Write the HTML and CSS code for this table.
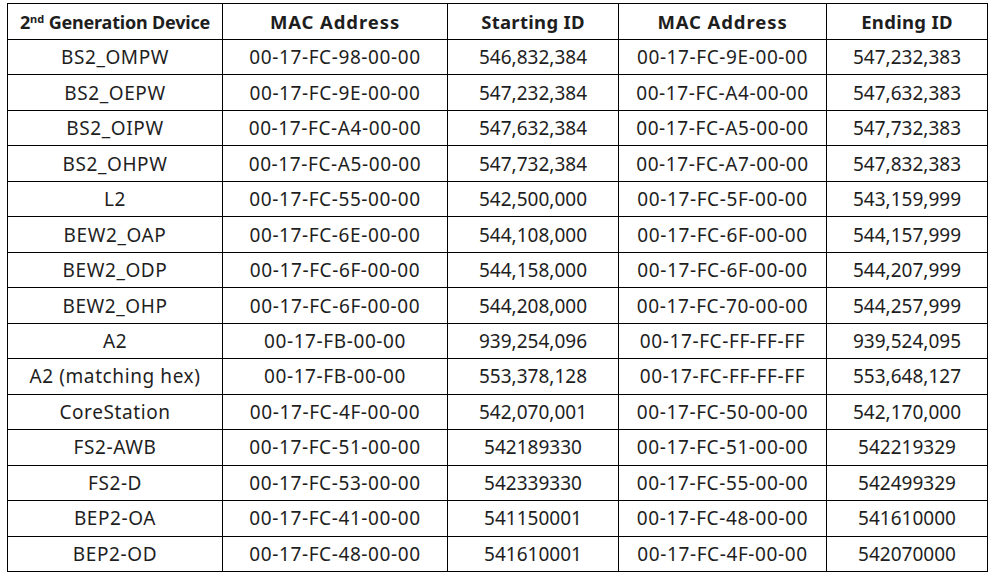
FILE: index.html
```html
<!DOCTYPE html>
<html>
<head>
<meta charset="utf-8">
<link rel="stylesheet" href="styles.css">
</head>
<body>
<table class="ids">
<colgroup>
<col class="c1"><col class="c2"><col class="c3"><col class="c4"><col class="c5">
</colgroup>
<thead>
<tr><th class="dev">2<sup>nd</sup> Generation Device</th><th class="mac">MAC Address</th><th>Starting ID</th><th class="mac">MAC Address</th><th>Ending ID</th></tr>
</thead>
<tbody>
<tr><td class="dev">BS2_OMPW</td><td class="mac">00-17-FC-98-00-00</td><td>546,832,384</td><td class="mac">00-17-FC-9E-00-00</td><td>547,232,383</td></tr>
<tr><td class="dev">BS2_OEPW</td><td class="mac">00-17-FC-9E-00-00</td><td>547,232,384</td><td class="mac">00-17-FC-A4-00-00</td><td>547,632,383</td></tr>
<tr><td class="dev">BS2_OIPW</td><td class="mac">00-17-FC-A4-00-00</td><td>547,632,384</td><td class="mac">00-17-FC-A5-00-00</td><td>547,732,383</td></tr>
<tr><td class="dev">BS2_OHPW</td><td class="mac">00-17-FC-A5-00-00</td><td>547,732,384</td><td class="mac">00-17-FC-A7-00-00</td><td>547,832,383</td></tr>
<tr><td class="dev">L2</td><td class="mac">00-17-FC-55-00-00</td><td>542,500,000</td><td class="mac">00-17-FC-5F-00-00</td><td>543,159,999</td></tr>
<tr><td class="dev">BEW2_OAP</td><td class="mac">00-17-FC-6E-00-00</td><td>544,108,000</td><td class="mac">00-17-FC-6F-00-00</td><td>544,157,999</td></tr>
<tr><td class="dev">BEW2_ODP</td><td class="mac">00-17-FC-6F-00-00</td><td>544,158,000</td><td class="mac">00-17-FC-6F-00-00</td><td>544,207,999</td></tr>
<tr><td class="dev">BEW2_OHP</td><td class="mac">00-17-FC-6F-00-00</td><td>544,208,000</td><td class="mac">00-17-FC-70-00-00</td><td>544,257,999</td></tr>
<tr><td class="dev">A2</td><td class="mac">00-17-FB-00-00</td><td>939,254,096</td><td class="mac">00-17-FC-FF-FF-FF</td><td>939,524,095</td></tr>
<tr><td class="dev">A2 (matching hex)</td><td class="mac">00-17-FB-00-00</td><td>553,378,128</td><td class="mac">00-17-FC-FF-FF-FF</td><td>553,648,127</td></tr>
<tr><td class="dev">CoreStation</td><td class="mac">00-17-FC-4F-00-00</td><td>542,070,001</td><td class="mac">00-17-FC-50-00-00</td><td>542,170,000</td></tr>
<tr><td class="dev">FS2-AWB</td><td class="mac">00-17-FC-51-00-00</td><td>542189330</td><td class="mac">00-17-FC-51-00-00</td><td>542219329</td></tr>
<tr><td class="dev">FS2-D</td><td class="mac">00-17-FC-53-00-00</td><td>542339330</td><td class="mac">00-17-FC-55-00-00</td><td>542499329</td></tr>
<tr><td class="dev">BEP2-OA</td><td class="mac">00-17-FC-41-00-00</td><td>541150001</td><td class="mac">00-17-FC-48-00-00</td><td>541610000</td></tr>
<tr><td class="dev">BEP2-OD</td><td class="mac">00-17-FC-48-00-00</td><td>541610001</td><td class="mac">00-17-FC-4F-00-00</td><td>542070000</td></tr>
</tbody>
</table>
</body>
</html>
```
FILE: styles.css
```css
html, body {
  margin: 0;
  background: #fff;
}
body {
  padding: 3px 0 0 7px;
  font-family: "Noto Sans", "Open Sans", sans-serif;
  color: #1e1e1e;
}
.ids {
  border-collapse: collapse;
  table-layout: fixed;
  width: 980px;
}
.c1 { width: 215px; }
.c2 { width: 225px; }
.c3 { width: 171px; }
.c4 { width: 208px; }
.c5 { width: 161px; }
.ids th, .ids td {
  border: 1px solid #000;
  padding: 0;
  text-align: center;
  white-space: nowrap;
  font-size: 19px;
}
.ids th {
  height: 35px;
  font-size: 18.5px;
  font-weight: bold;
  letter-spacing: 0.3px;
}
.ids th.mac {
  letter-spacing: 0.9px;
}
.ids th.dev {
  font-size: 18px;
  letter-spacing: -0.2px;
}
.ids td {
  height: 34.47px;
}
.ids td.mac {
  letter-spacing: 0.6px;
}
.ids td.dev {
  letter-spacing: 0.6px;
}
.ids sup {
  font-size: 11px;
  vertical-align: 6px;
  line-height: 0;
  letter-spacing: 0;
}
```
